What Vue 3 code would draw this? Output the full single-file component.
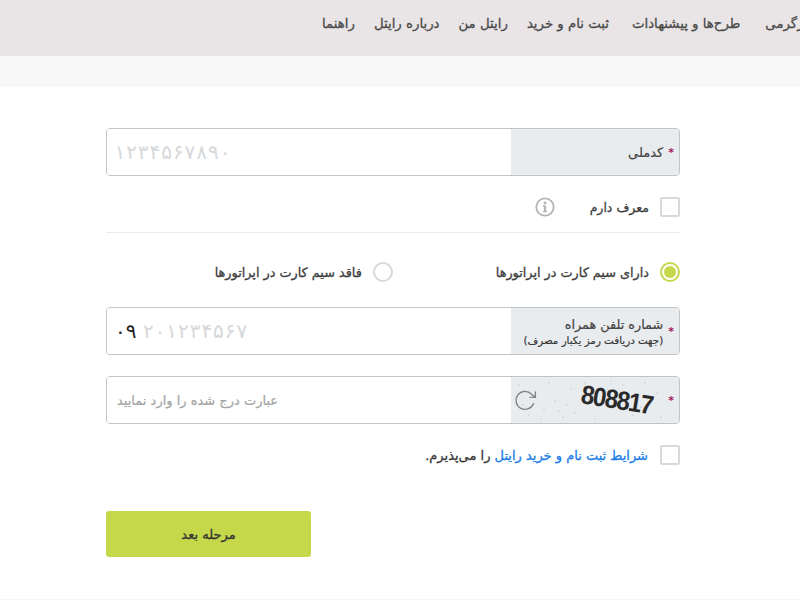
<script setup>
const navItems = ['راهنما', 'درباره رایتل', 'رایتل من', 'ثبت نام و خرید', 'طرح‌ها و پیشنهادات', 'سرگرمی']
const specks = [[8,8],[12,28],[18,38],[24,14],[33,32],[38,6],[44,24],[52,40],[60,12],[64,36],[74,6],[84,42],[100,4],[112,8],[122,38],[130,30],[134,6],[140,22],[146,16],[150,40],[30,42],[56,28],[20,20],[48,34]]
const nationalId = [...'۱۲۳۴۵۶۷۸۹۰']
const phoneHint = [...'۲۰۱۲۳۴۵۶۷']
</script>

<template>
  <div class="page">
    <header class="top">
      <nav class="nav">
        <span v-for="item in navItems" :key="item" class="nav-item" dir="rtl">{{ item }}</span>
      </nav>
    </header>
    <div class="band"></div>

    <main class="form">
      <div class="field">
        <div class="value"><span class="digits ph"><span v-for="(d, i) in nationalId" :key="i" class="digit">{{ d }}</span></span></div>
        <div class="label" dir="rtl"><i class="star">*</i><span>کدملی</span></div>
      </div>

      <div class="check-row ref-row">
        <svg class="info" viewBox="0 0 20 20" width="20" height="20">
          <circle cx="10" cy="10" r="8.7" fill="none" stroke="#b5b5b5" stroke-width="1.8" />
          <circle cx="10" cy="5.9" r="1.5" fill="#b5b5b5" />
          <path d="M7.9 8.5h3.2v5.4h1.1v1.4H7.8v-1.4h1.1V9.9h-1z" fill="#b5b5b5" />
        </svg>
        <span class="text ref-text" dir="rtl">معرف دارم</span>
        <span class="box"></span>
      </div>

      <hr class="rule" />

      <div class="radios">
        <label class="radio-item off">
          <span class="text" dir="rtl">فاقد سیم کارت در اپراتورها</span>
          <span class="radio"></span>
        </label>
        <label class="radio-item">
          <span class="text" dir="rtl">دارای سیم کارت در اپراتورها</span>
          <span class="radio on"><span class="dot"></span></span>
        </label>
      </div>

      <div class="field phone">
        <div class="value">
          <span class="fixed">۰۹</span>
          <span class="digits ph"><span v-for="(d, i) in phoneHint" :key="i" class="digit">{{ d }}</span></span>
        </div>
        <div class="label two" dir="rtl">
          <i class="star">*</i>
          <span class="two-text">
            <span>شماره تلفن همراه</span>
            <small>(جهت دریافت رمز یکبار مصرف)</small>
          </span>
        </div>
      </div>

      <div class="field captcha-field">
        <div class="value"><span class="hint" dir="rtl">عبارت درج شده را وارد نمایید</span></div>
        <div class="label captcha" dir="ltr">
          <svg class="reload" viewBox="0 0 24 24" width="24" height="24">
            <path d="M19.6 15.2A9 9 0 1 1 17.6 6.2L21 9" fill="none" stroke="#808080" stroke-width="1.3" />
            <path d="M21.4 3.4V9.4H15.4" fill="none" stroke="#808080" stroke-width="1.3" />
          </svg>
          <svg class="noise" viewBox="0 0 168 46" width="168" height="46">
            <circle v-for="(s, i) in specks" :key="i" :cx="s[0]" :cy="s[1]" r="0.7" fill="#c2c4c6" />
          </svg>
          <span class="code">808817</span>
          <i class="star">*</i>
        </div>
      </div>

      <div class="check-row terms">
        <span class="text terms-text" dir="rtl"><a class="link">شرایط ثبت نام و خرید رایتل</a> را می‌پذیرم.</span>
        <span class="box"></span>
      </div>

      <button class="next" type="button">مرحله بعد</button>
    </main>

    <div class="foot"></div>
  </div>
</template>

<style scoped>
.page {
  width: 800px;
  height: 600px;
  overflow: hidden;
  background: #fff;
  font-family: "DejaVu Sans", sans-serif;
  display: flex;
  flex-direction: column;
  color: #333;
}
.top {
  height: 56px;
  flex: none;
  background: #e9e5e6;
  overflow: hidden;
}
.nav {
  display: flex;
  gap: 19px;
  padding: 15px 0 0 322px;
  white-space: nowrap;
  width: max-content;
}
.nav-item {
  font-size: 13.3px;
  line-height: 18px;
  color: #4a4a4a;
  -webkit-text-stroke: 0.3px #4a4a4a;
}
.nav-item:nth-child(5) { margin-left: 4px; }
.nav-item:last-child { margin-left: 6px; }
.band {
  height: 31px;
  flex: none;
  background: #f9f8f8;
}
.form {
  flex: 1;
  width: 574px;
  margin-left: 106px;
  padding-top: 41px;
  display: flex;
  flex-direction: column;
}
.field {
  height: 48px;
  flex: none;
  display: flex;
  border: 1px solid #c4c4c4;
  border-radius: 4px;
  box-sizing: border-box;
  overflow: hidden;
  position: relative;
}
.value {
  flex: 1;
  display: flex;
  align-items: center;
  padding-left: 7px;
  background: #fff;
}
.label {
  width: 168px;
  flex: none;
  background: #e9ecef;
  display: flex;
  align-items: center;
  gap: 5px;
  padding-right: 5px;
  box-sizing: border-box;
  font-size: 13px;
  color: #444;
  -webkit-text-stroke: 0.2px #444;
}
.star {
  font-style: normal;
  color: #a3195b;
  font-size: 11px;
  line-height: 1;
  font-weight: 700;
  -webkit-text-stroke: 0;
}
.digits {
  display: flex;
  font-size: 20px;
  line-height: 20px;
}
.digit {
  width: 11.7px;
  text-align: center;
}
.ph { color: #d6d8da; }
.fixed {
  color: #222;
  font-size: 20px;
  line-height: 20px;
  letter-spacing: 3px;
  margin-left: 1px;
  margin-right: 6px;
}
.hint {
  font-size: 13px;
  color: #a3a3a3;
  -webkit-text-stroke: 0.2px #a3a3a3;
  padding-left: 3px;
}
.check-row {
  display: flex;
  justify-content: flex-end;
  align-items: center;
  flex: none;
}
.ref-row {
  margin-top: 21px;
  height: 20px;
}
.info { margin-right: 35px; }
.text {
  font-size: 13px;
  line-height: 20px;
  padding-top: 2px;
  color: #3d3d3d;
  -webkit-text-stroke: 0.3px #3d3d3d;
}
.ref-text { margin-right: 11px; font-size: 12.5px; }
.box {
  width: 20px;
  height: 20px;
  border: 2px solid #d9d9d9;
  border-radius: 2px;
  box-sizing: border-box;
  background: #fff;
  flex: none;
}
.rule {
  margin: 15px 0 0;
  border: 0;
  border-top: 1px solid #ececec;
  flex: none;
}
.radios {
  margin-top: 29px;
  height: 20px;
  flex: none;
  display: flex;
  justify-content: flex-end;
}
.radio-item {
  display: flex;
  align-items: center;
  gap: 11px;
}
.radio-item .text { font-size: 12.8px; }
.radio-item.off { margin-right: 103px; }
.radio {
  width: 20px;
  height: 20px;
  box-sizing: border-box;
  border: 2px solid #d8d8d8;
  border-radius: 50%;
  display: flex;
  align-items: center;
  justify-content: center;
  background: #fff;
}
.radio.on { border-color: #c4d84a; }
.dot {
  width: 12px;
  height: 12px;
  border-radius: 50%;
  background: #c4d84a;
}
.phone { margin-top: 25px; }
.two { gap: 5px; align-items: center; }
.two-text {
  display: flex;
  flex-direction: column;
  align-items: flex-start;
  gap: 1px;
  line-height: 17px;
  white-space: nowrap;
  font-size: 12.8px;
}
.two-text small {
  font-size: 10.3px;
  line-height: 13px;
  color: #333;
}
.captcha-field { margin-top: 21px; }
.captcha {
  position: relative;
  padding: 0 5px 0 3px;
  justify-content: space-between;
  gap: 0;
}
.reload { flex: none; position: relative; }
.noise { position: absolute; left: 0; top: 0; }
.code {
  position: relative;
  font-family: "Liberation Sans", sans-serif;
  font-size: 24px;
  font-weight: 700;
  color: #2a2a2a;
  letter-spacing: -1.4px;
  transform: rotate(9deg) scaleY(1.1);
  margin-left: 27px;
  -webkit-text-stroke: 0;
}
.terms { margin-top: 21px; height: 20px; }
.terms-text { margin-right: 12px; color: #333; }
.link { color: #1a7ce8; -webkit-text-stroke: 0.3px #1a7ce8; }
.next {
  margin-top: 46px;
  width: 205px;
  height: 46px;
  flex: none;
  border: 0;
  border-radius: 3px;
  background: #c4d84a;
  font-family: inherit;
  font-size: 13px;
  color: #333;
  -webkit-text-stroke: 0.3px #333;
}
.foot {
  height: 1px;
  flex: none;
  background: #f6f6f6;
}
</style>
